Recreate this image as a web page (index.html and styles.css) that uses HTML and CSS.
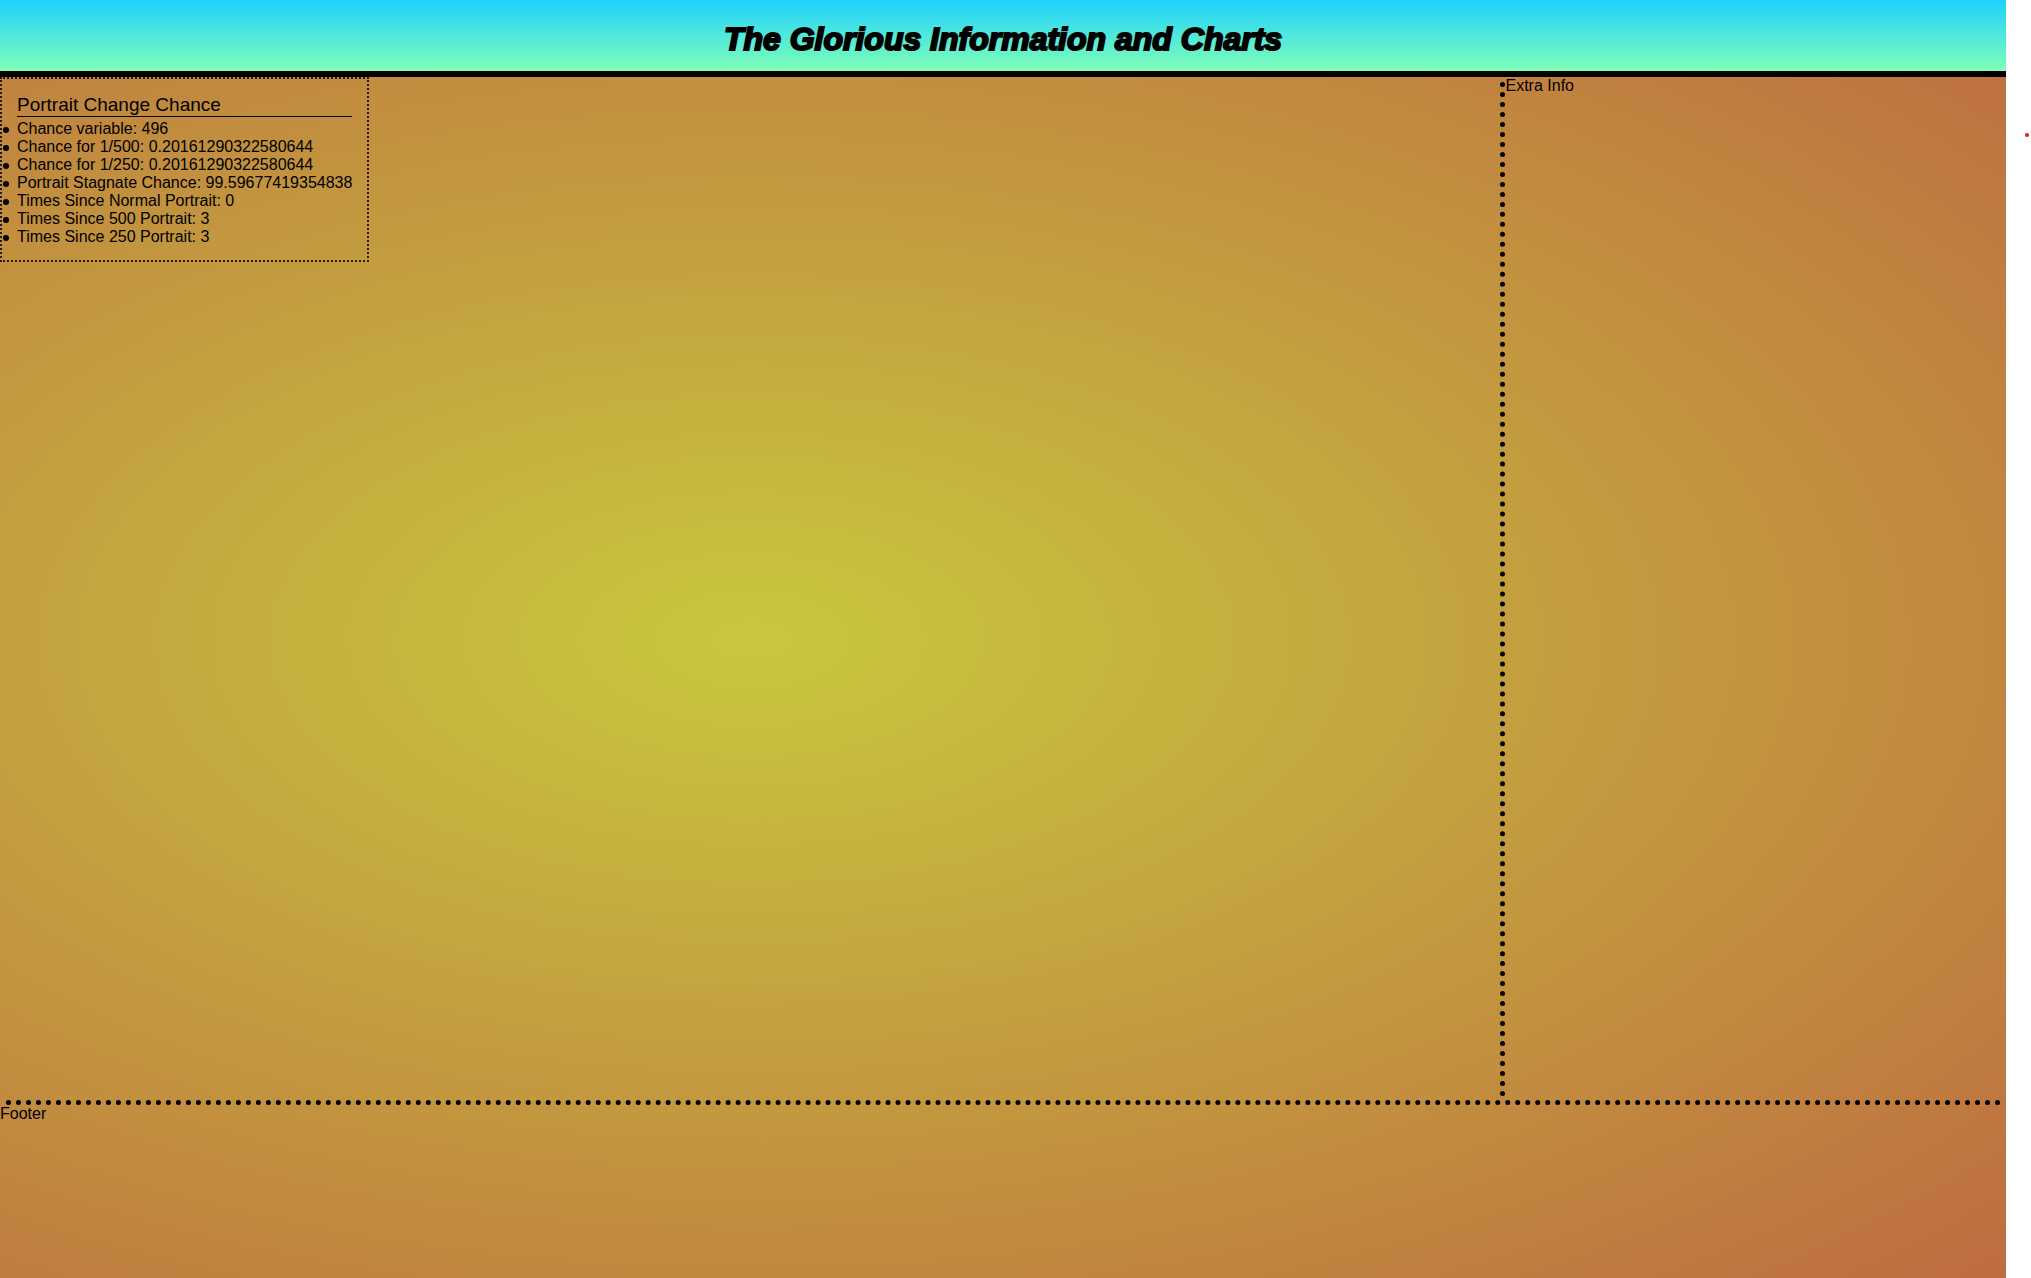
FILE: index.html
```html
<!DOCTYPE html>
<html lang="en">
<head>
    <meta charset="UTF-8">
    <title>Information and Charts</title>
    <link rel="stylesheet" href="styles.css">
</head>
<body>
    <div class="page">
        <header class="header">
            <h1>The Glorious Information and Charts</h1>
        </header>

        <main class="main">
            <section class="stats">
                <h2>Portrait Change Chance</h2>
                <ul>
                    <li>Chance variable: 496</li>
                    <li>Chance for 1/500: 0.20161290322580644</li>
                    <li>Chance for 1/250: 0.20161290322580644</li>
                    <li>Portrait Stagnate Chance: 99.59677419354838</li>
                    <li>Times Since Normal Portrait: 0</li>
                    <li>Times Since 500 Portrait: 3</li>
                    <li>Times Since 250 Portrait: 3</li>
                </ul>
            </section>
        </main>

        <aside class="extra">Extra Info</aside>

        <footer class="footer">Footer</footer>
    </div>
    <span class="marker"></span>
</body>
</html>
```
FILE: styles.css
```css
* {
    box-sizing: border-box;
    margin: 0;
    padding: 0;
}

body {
    position: relative;
    padding-right: 25px;
    font-family: "Liberation Sans", Arial, sans-serif;
    font-size: 16px;
    line-height: 18px;
    background: #fff;
    color: #000;
}

.page {
    display: grid;
    grid-template-columns: 3fr 1fr;
    grid-template-rows: auto 1fr 13.9vh;
    min-height: 100vh;
    background: radial-gradient(ellipse at 37.5% 50%, #c8c83e, #be6c40);
}

.header {
    grid-column: 1 / 3;
    padding: 20px 0 12px;
    border-bottom: 6px solid #000;
    background: linear-gradient(#1fd1ff, #80ffb7);
    text-align: center;
}

h1 {
    font-family: Impact, "Liberation Sans Narrow", "Liberation Sans", sans-serif;
    font-size: 32px;
    font-style: italic;
    font-weight: bold;
    line-height: 39px;
    -webkit-text-stroke: 2px #000;
}

.main {
    display: flex;
    align-items: flex-start;
    justify-content: space-between;
}

/* dotted divider */
.main::after {
    content: "";
    align-self: stretch;
    margin: 5px 0 3px;
    border-right: 5px dotted #000;
}

/* chance panel */
.stats {
    padding: 15px 15px 14px;
    border: 2px dotted rgba(0, 0, 0, 0.8);
}

h2 {
    margin-bottom: 3px;
    border-bottom: 1px solid #000;
    font-size: 19px;
    font-weight: normal;
    line-height: 22px;
}

ul {
    list-style: none;
}

li::before {
    content: "";
    display: inline-block;
    width: 6px;
    height: 6px;
    margin: 0 8px 0 -14px;
    border-radius: 50%;
    background: #000;
    vertical-align: middle;
}

.extra {
    padding-left: 1px;
}

.footer {
    grid-column: 1 / 3;
}

.footer::before {
    content: "";
    display: block;
    margin: 0 4px 0 6px;
    border-top: 5px dotted #000;
}

.marker {
    position: absolute;
    top: 133px;
    right: 2px;
    width: 4px;
    height: 4px;
    border-radius: 50%;
    background: #f01818;
}
```
